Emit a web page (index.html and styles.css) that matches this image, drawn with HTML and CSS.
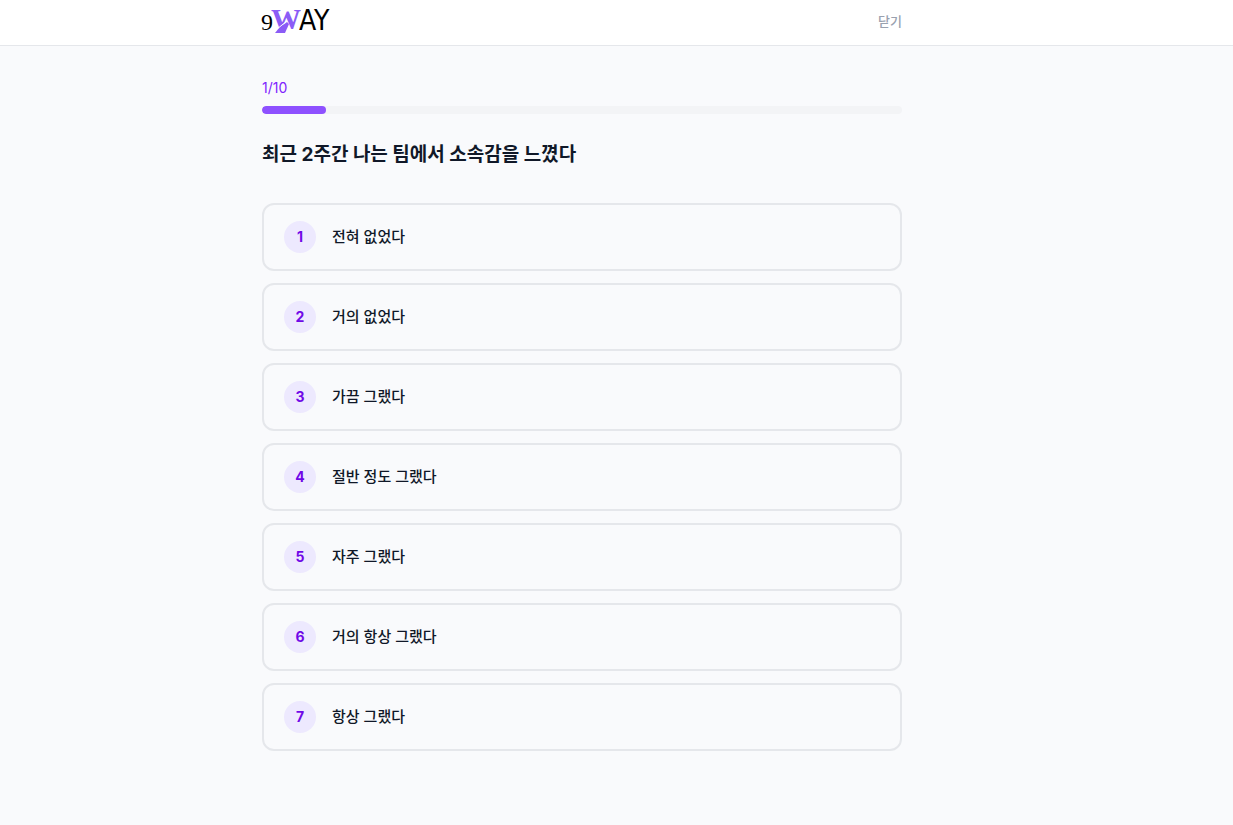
FILE: index.html
```html
<!DOCTYPE html>
<html lang="ko">
<head>
  <meta charset="UTF-8" />
  <meta name="viewport" content="width=device-width, initial-scale=1.0" />
  <title>9WAY</title>
  <link rel="stylesheet" href="styles.css">
</head>
<body>

  <header class="header">
    <div class="container header-inner">
      <svg class="logo" width="72" height="33" viewBox="0 0 72 33" role="img" aria-label="9WAY">
        <text class="logo-nine" x="-1" y="26">9</text>
        <text class="logo-w" x="9" y="25">W</text>
        <path class="logo-slash" d="M13 29L17 24L25 18L27 20L23 29Z" />
        <path class="logo-cut" d="M15 25L25 17" />
        <text class="logo-ay" x="37" y="26">AY</text>
      </svg>
      <button type="button" class="close-btn">닫기</button>
    </div>
  </header>

  <main class="container survey">
    <label class="progress-label" for="progress">1/10</label>
    <progress class="progress" id="progress" value="1" max="10"></progress>

    <h1 class="question">최근 2주간 나는 팀에서 소속감을 느꼈다</h1>

    <div class="options">
      <button type="button" class="option"><span class="num">1</span><span>전혀 없었다</span></button>
      <button type="button" class="option"><span class="num">2</span><span>거의 없었다</span></button>
      <button type="button" class="option"><span class="num">3</span><span>가끔 그랬다</span></button>
      <button type="button" class="option"><span class="num">4</span><span>절반 정도 그랬다</span></button>
      <button type="button" class="option"><span class="num">5</span><span>자주 그랬다</span></button>
      <button type="button" class="option"><span class="num">6</span><span>거의 항상 그랬다</span></button>
      <button type="button" class="option"><span class="num">7</span><span>항상 그랬다</span></button>
    </div>
  </main>

</body>
</html>
```
FILE: styles.css
```css
* {
  box-sizing: border-box;
  margin: 0;
  padding: 0;
}
body {
  font-family: Inter, 'Noto Sans CJK KR', sans-serif;
  background: #f9fafc;
  color: #101828;
  min-height: 100vh;
  padding-bottom: 40px;
}
button {
  font-family: inherit;
  color: inherit;
  background: none;
  border: none;
  cursor: pointer;
}

/* content sits a little left of center */
.container {
  width: 100%;
  max-width: 741px;
  margin: 0 auto;
  padding: 0 85px 0 16px;
}

/* Header */
.header {
  background: #fff;
  border-bottom: 1px solid #e5e7eb;
}
.header-inner {
  display: flex;
  justify-content: space-between;
  align-items: center;
  height: 45px;
}
.logo {
  margin-bottom: 4px;
  overflow: visible;
}
.logo-nine {
  font: 24px 'Liberation Serif', serif;
}
.logo-w {
  font: bold 30px 'Liberation Serif', serif;
  fill: #8b5cf6;
}
.logo-slash {
  fill: #8b5cf6;
}
.logo-cut {
  stroke: #fff;
  stroke-width: 1;
}
.logo-ay {
  font: 28px 'DejaVu Sans Condensed', 'DejaVu Sans', sans-serif;
}
.close-btn {
  font-size: 13px;
  font-weight: 500;
  line-height: 20px;
  color: #99a1af;
  margin-bottom: 4px;
}

/* Progress */
.survey {
  padding-top: 32px;
}
.progress-label {
  display: block;
  font-size: 14px;
  line-height: 20px;
  color: #7f22fe;
  margin-bottom: 8px;
}
.progress {
  appearance: none;
  display: block;
  width: 100%;
  height: 8px;
  border: none;
  border-radius: 4px;
  background: #f3f4f6;
  overflow: hidden;
}
.progress::-webkit-progress-bar {
  background: #f3f4f6;
}
.progress::-webkit-progress-value {
  background: #8e51ff;
  border-radius: 4px;
}

.question {
  font-size: 19px;
  font-weight: 700;
  line-height: 28px;
  margin: 27px 0 34px;
}

/* Options */
.options {
  display: flex;
  flex-direction: column;
  gap: 12px;
}
.option {
  display: flex;
  align-items: center;
  gap: 16px;
  width: 100%;
  padding: 16px 20px;
  border: 2px solid #e5e7eb;
  border-radius: 12px;
  font-size: 15px;
  font-weight: 500;
  line-height: 32px;
  text-align: left;
}
.option:hover {
  border-color: #c4b4ff;
}
.num {
  width: 32px;
  height: 32px;
  border-radius: 50%;
  background: #ede9fe;
  color: #7008e7;
  font-size: 14px;
  font-weight: 700;
  text-align: center;
}
```
